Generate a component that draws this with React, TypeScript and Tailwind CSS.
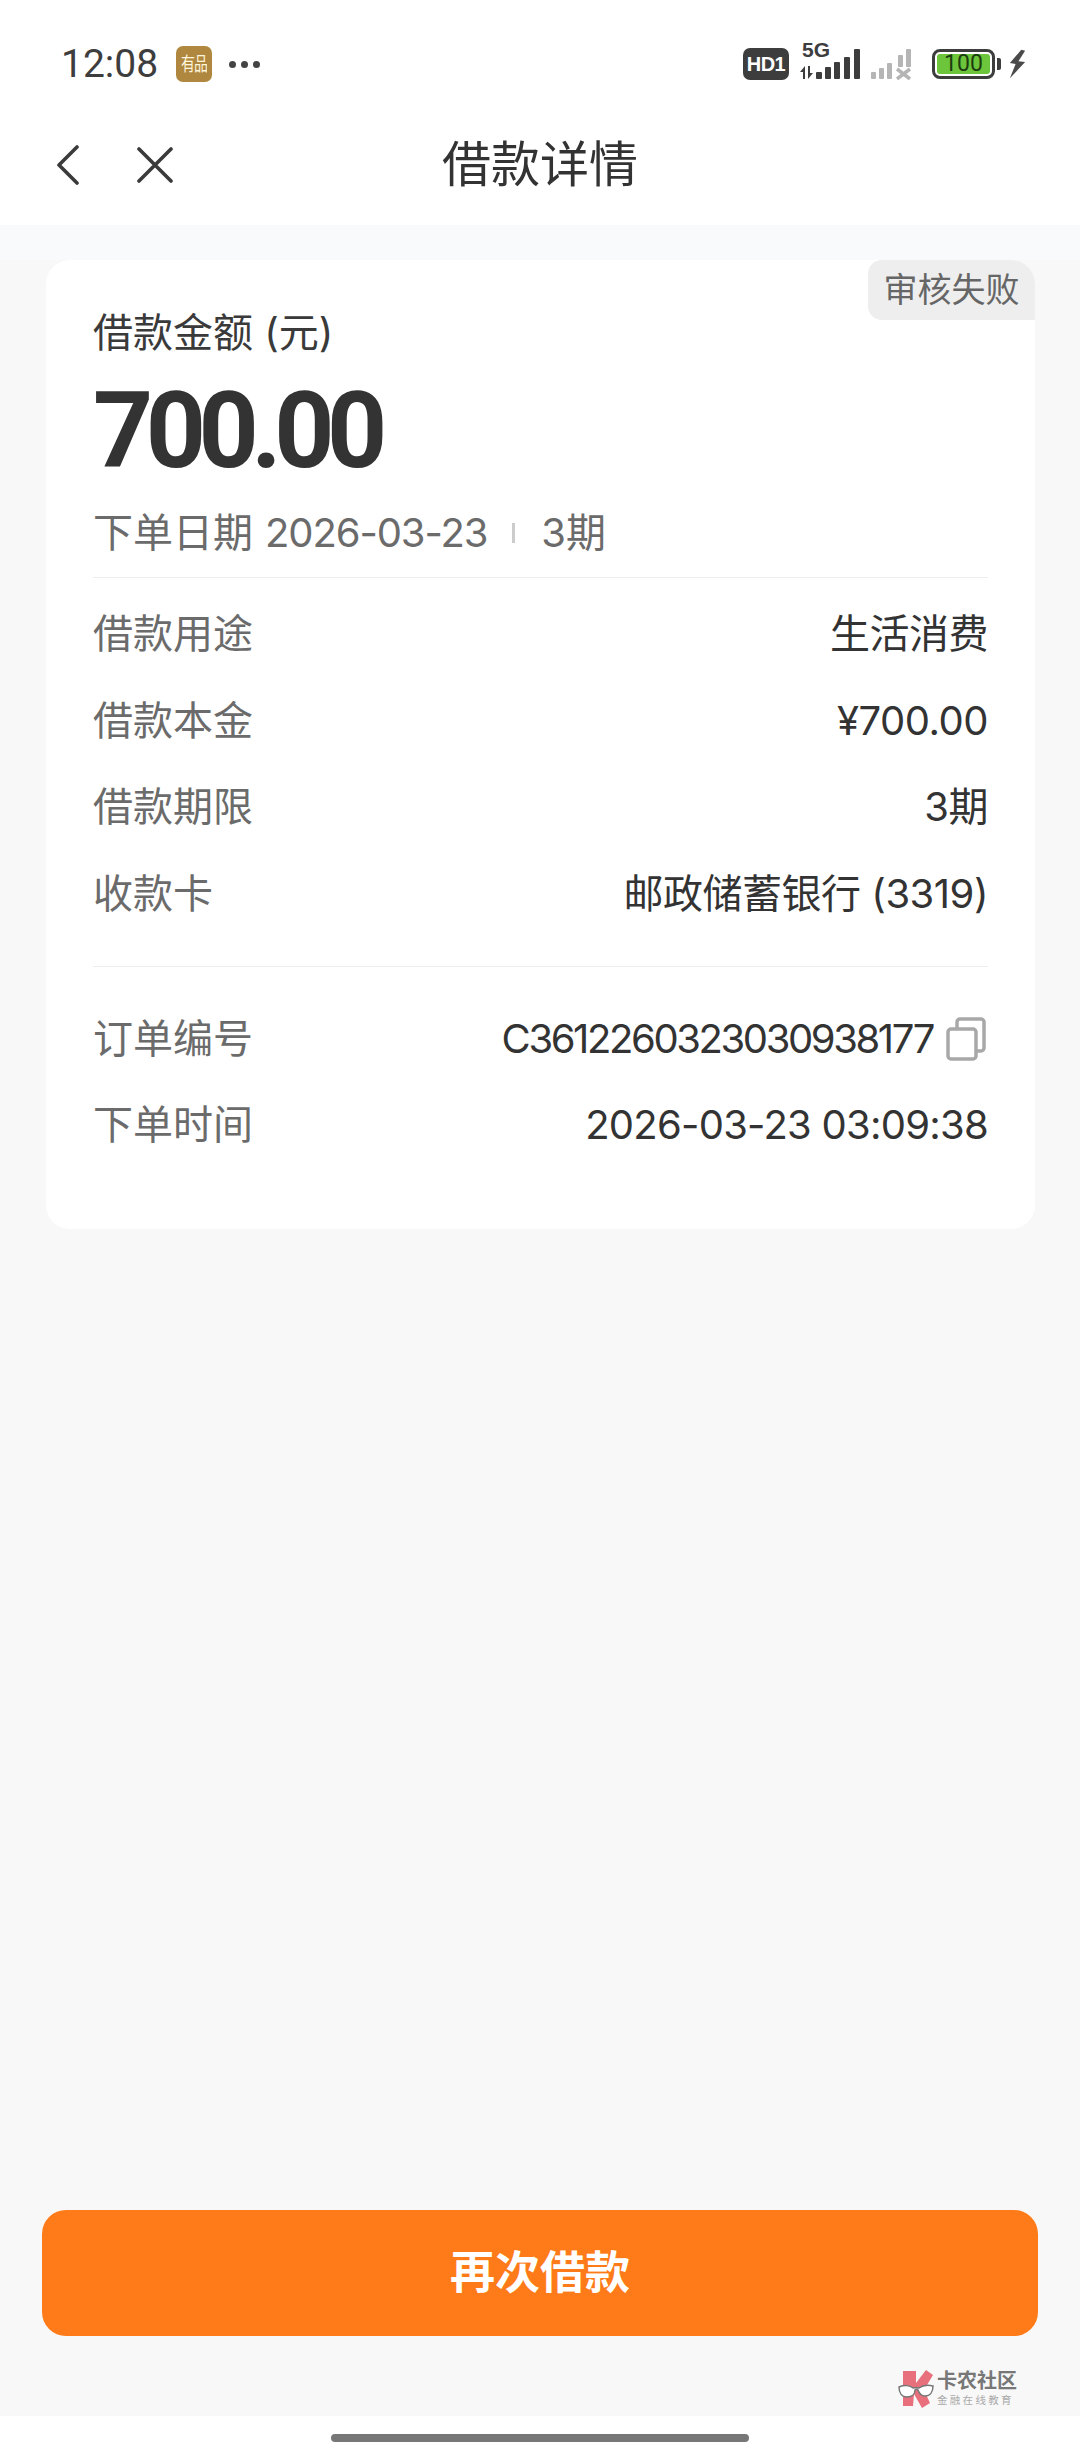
const cjk = "font-['Inter','Noto_Sans_CJK_SC',sans-serif]";

const loanRows = [
  { label: '借款用途', value: '生活消费' },
  { label: '借款本金', value: '¥700.00' },
  { label: '借款期限', value: '3期' },
  { label: '收款卡', value: '邮政储蓄银行 (3319)' },
];

function StatusBar() {
  return (
    <div className="h-[98px] pt-[46px] pl-[61px] pr-[53px] flex items-start justify-between">
      <div className="flex items-center h-[36px]">
        <span className="text-[39px] leading-[36px] text-[#3d3d3d] w-[115px] font-['Roboto']">12:08</span>
        <div className="w-[36px] h-[36px] rounded-[7px] bg-[#b0873f] text-[#fff6dc] text-[14px] leading-[36px] text-center tracking-[-1px] overflow-hidden">
          <span className="inline-block scale-y-[1.35]">有品</span>
        </div>
        <div className="flex gap-[5px] ml-[17px]">
          <span className="w-[7px] h-[7px] rounded-full bg-[#444]" />
          <span className="w-[7px] h-[7px] rounded-full bg-[#444]" />
          <span className="w-[7px] h-[7px] rounded-full bg-[#444]" />
        </div>
      </div>
      <div className="flex items-center h-[36px]">
        <div className="w-[46px] h-[32px] rounded-[7px] bg-[#3d3d3d] text-white text-[20px] leading-[32px] text-center font-bold font-['Liberation_Sans'] tracking-[-0.5px]">
          HD1
        </div>
        <div className="relative w-[64px] h-[32px] ml-[11px]">
          <span className="absolute left-[2px] top-[-10px] text-[21px] leading-[24px] font-bold text-[#3d3d3d] font-['Liberation_Sans']">5G</span>
          <svg className="absolute left-0 top-0" width="64" height="32" viewBox="0 0 64 32" fill="#3d3d3d">
            <path d="M0 24l5-6v13H3v-7zM8 18h2v7h3l-5 6z" />
            <rect x="16" y="24" width="6" height="7" rx="1" />
            <rect x="25" y="19" width="6" height="12" rx="1" />
            <rect x="34" y="14" width="6" height="17" rx="1" />
            <rect x="44" y="9" width="6" height="22" rx="1" />
            <rect x="54" y="1" width="6" height="30" rx="1" />
          </svg>
        </div>
        <svg className="ml-[6px]" width="46" height="32" viewBox="0 0 46 32" fill="#b5b5b5">
          <rect x="1" y="24" width="5" height="7" rx="1" />
          <rect x="9" y="20" width="5" height="11" rx="1" />
          <rect x="17" y="15" width="5" height="16" rx="1" />
          <rect x="28" y="7" width="5" height="12" rx="1" />
          <rect x="36" y="1" width="5" height="18" rx="1" />
          <path d="M27 21l13 10M40 21L27 31" stroke="#b5b5b5" strokeWidth="3.500" fill="none" />
        </svg>
        <div className="ml-[16px] w-[63px] h-[30px] rounded-[8px] border-[3px] border-[#3d3d3d] p-[2px]">
          <div className="w-full h-full rounded-[3px] bg-[#6cc53a] text-[#1c3d10] text-[23px] leading-[20px] text-center font-['Roboto']">100</div>
        </div>
        <div className="w-[4px] h-[12px] ml-[2px] rounded-r-[2px] bg-[#3d3d3d]" />
        <svg className="ml-[7px]" width="19" height="32" viewBox="0 0 20 32" fill="#4a4a4a">
          <path d="M14 1L2 15l6 1-6 15 16-17-7-1 7-11z" />
        </svg>
      </div>
    </div>
  );
}

function NavBar() {
  return (
    <div className="relative h-[127px] flex items-center justify-center">
      <div className="absolute left-[56px] top-[47px] flex items-center gap-[57px]">
        <svg width="24" height="40" viewBox="0 0 24 40" fill="none" stroke="#3a3a3a" strokeWidth="3.600" strokeLinecap="round" strokeLinejoin="round">
          <path d="M21 2L3 20l18 18" />
        </svg>
        <svg width="36" height="36" viewBox="0 0 36 36" fill="none" stroke="#3a3a3a" strokeWidth="3.600" strokeLinecap="round">
          <path d="M2 2l32 32M34 2L2 34" />
        </svg>
      </div>
      <h1 className="text-[49px] leading-none text-[#333] mt-[5px]">借款详情</h1>
    </div>
  );
}

function Watermark() {
  return (
    <div className="absolute right-[63px] bottom-[8px] flex items-center">
      <svg width="36" height="38" viewBox="0 0 36 38">
        <path d="M5 1h13v12l10-13 7 5-9 15 6 13-8 5-8-14-1 12H5z" fill="#e8707c" />
        <path d="M1 17c5-2 11-2 14 1 3-1 4-1 6 0 4-3 10-3 14-2 0 6-3 10-8 10-4 0-6-3-7-6-1-1-2-1-3 0 0 4-3 7-8 7-5 0-8-4-8-10z" fill="#fff" stroke="#777" strokeWidth="1.500" />
      </svg>
      <div className="ml-[3px] flex flex-col">
        <span className="text-[20px] leading-[22px] font-bold text-[#777]">卡农社区</span>
        <span className="text-[10.500px] leading-[14px] mt-[2px] tracking-[2.300px] text-[#aaa]">金融在线教育</span>
      </div>
    </div>
  );
}

export default function App() {
  return (
    <div className={`${cjk} relative w-[1080px] h-[2460px] bg-[#f8f8f8] flex flex-col overflow-hidden`}>
      <div className="bg-white">
        <StatusBar />
        <NavBar />
      </div>
      <div className="h-[35px] bg-[#f9fafc]" />

      <section className="relative ml-[46px] mr-[45px] h-[969px] bg-white rounded-[24px] pl-[47px] pr-[47px] overflow-hidden">
        <div className="absolute right-0 top-0 w-[167px] h-[60px] bg-[#eeeeee] rounded-bl-[14px] rounded-tl-[14px] text-[34px] leading-[60px] text-center text-[#666]">
          审核失败
        </div>

        <div className="pt-[48px] text-[40px] leading-[50px] text-[#3a3a3a]">借款金额 (元)</div>
        <div className="mt-[24px] text-[105px] leading-[100px] font-bold text-[#333] tracking-[-7.500px] font-['Roboto']">700.00</div>

        <div className="flex items-center mt-[26px] text-[40px] leading-[50px] text-[#6b6b6b]">
          <span>下单日期</span>
          <span className="ml-[12px] tracking-[-1.100px]">2026-03-23</span>
          <span className="w-[3px] h-[20px] bg-[#ccc] ml-[25px] mr-[26px]" />
          <span>3期</span>
        </div>
        <div className="mt-[19px] h-[1px] bg-[#eeeeee]" />

        <div className="pt-[13px] pb-[29px] border-b border-[#eeeeee]">
          {loanRows.map((row) => (
            <div key={row.label} className="flex justify-between items-center h-[86.500px] text-[40px]">
              <span className="text-[#6b6b6b]">{row.label}</span>
              <span className="text-[#333] tracking-[-0.5px]">{row.value}</span>
            </div>
          ))}
        </div>

        <div className="pt-[29px]">
          <div className="flex justify-between items-center h-[86px] text-[40px]">
            <span className="text-[#6b6b6b]">订单编号</span>
            <span className="flex items-center text-[#333] pr-[2px]">
              <span className="tracking-[-2.400px]">C3612260323030938177</span>
              <svg className="ml-[13px]" width="40" height="44" viewBox="0 0 40 44" fill="none" stroke="#a8a8a8" strokeWidth="3.500" strokeLinejoin="round">
                <rect x="2" y="12" width="28" height="30" rx="3" />
                <path d="M11 12V5a3 3 0 0 1 3-3h21a3 3 0 0 1 3 3v26a3 3 0 0 1-3 3h-5" />
              </svg>
            </span>
          </div>
          <div className="flex justify-between items-center h-[86px] text-[40px]">
            <span className="text-[#6b6b6b]">下单时间</span>
            <span className="text-[#333] tracking-[-0.75px]">2026-03-23 03:09:38</span>
          </div>
        </div>
      </section>

      <div className="relative flex-1 flex flex-col justify-end">
        <button className="mx-[42px] mb-[80px] h-[126px] rounded-[24px] bg-[#ff7b1a] text-white text-[45px] font-bold">
          再次借款
        </button>
        <Watermark />
      </div>

      <div className="h-[44px] bg-white flex justify-center pt-[18px]">
        <div className="w-[418px] h-[8px] rounded-full bg-[#777]" />
      </div>
    </div>
  );
}
